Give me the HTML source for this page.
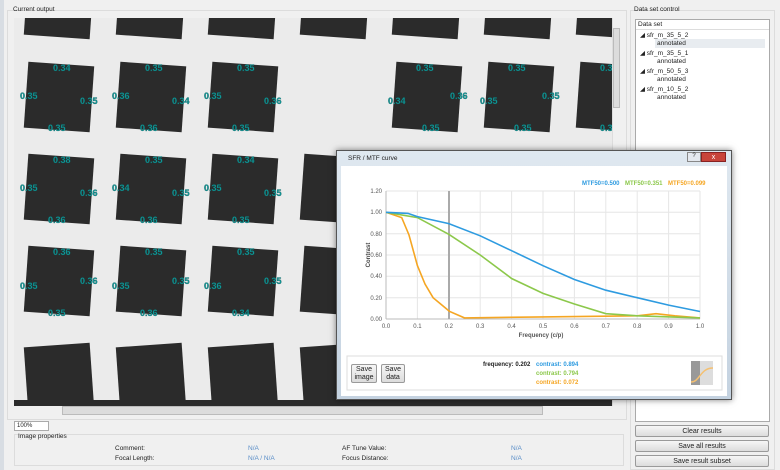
<!DOCTYPE html>
<html><head><meta charset="utf-8"><style>
*{margin:0;padding:0;box-sizing:border-box}
body{width:780px;height:470px;overflow:hidden;background:#f0f0f0;font-family:"Liberation Sans",sans-serif;font-size:7px;color:#222;position:relative}
.a{position:absolute}
.btn{position:absolute;border:1px solid #9a9a9a;border-radius:2px;background:linear-gradient(#f6f6f6,#dcdcdc);text-align:center;font-size:7px;line-height:11px}
.lab{position:absolute;font-size:6.5px}
.na{color:#5a8ec8}
</style></head><body>
<div class="a" style="left:0;top:0;width:4px;height:470px;background:#d8dde3"></div>
<div class="a" style="left:7px;top:10px;width:620px;height:410px;border:1px solid #dcdcdc"></div>
<div class="lab" style="left:13px;top:6px">Current output</div>
<svg class="a" style="left:14px;top:18px" width="598" height="388" viewBox="14 18 598 388">
<rect x="14" y="18" width="598" height="388" fill="#ebebeb"/>
<g fill="#2b2b2b">
<rect x="26" y="-29" width="66" height="66" transform="rotate(4 59 4)"/>
<rect x="118" y="-29" width="66" height="66" transform="rotate(4 151 4)"/>
<rect x="210" y="-29" width="66" height="66" transform="rotate(4 243 4)"/>
<rect x="302" y="-29" width="66" height="66" transform="rotate(4 335 4)"/>
<rect x="394" y="-29" width="66" height="66" transform="rotate(4 427 4)"/>
<rect x="486" y="-29" width="66" height="66" transform="rotate(4 519 4)"/>
<rect x="578" y="-29" width="66" height="66" transform="rotate(4 611 4)"/>
<rect x="26" y="64" width="66" height="66" transform="rotate(4 59 97)"/>
<rect x="118" y="64" width="66" height="66" transform="rotate(4 151 97)"/>
<rect x="210" y="64" width="66" height="66" transform="rotate(4 243 97)"/>
<rect x="394" y="64" width="66" height="66" transform="rotate(4 427 97)"/>
<rect x="486" y="64" width="66" height="66" transform="rotate(4 519 97)"/>
<rect x="578" y="64" width="66" height="66" transform="rotate(4 611 97)"/>
<rect x="26" y="156" width="66" height="66" transform="rotate(4 59 189)"/>
<rect x="118" y="156" width="66" height="66" transform="rotate(4 151 189)"/>
<rect x="210" y="156" width="66" height="66" transform="rotate(4 243 189)"/>
<rect x="302" y="156" width="66" height="66" transform="rotate(4 335 189)"/>
<rect x="26" y="248" width="66" height="66" transform="rotate(4 59 281)"/>
<rect x="118" y="248" width="66" height="66" transform="rotate(4 151 281)"/>
<rect x="210" y="248" width="66" height="66" transform="rotate(4 243 281)"/>
<rect x="302" y="248" width="66" height="66" transform="rotate(4 335 281)"/>
<rect x="26" y="345" width="66" height="66" transform="rotate(-4 59 378)"/>
<rect x="118" y="345" width="66" height="66" transform="rotate(-4 151 378)"/>
<rect x="210" y="345" width="66" height="66" transform="rotate(-4 243 378)"/>
<rect x="302" y="345" width="66" height="66" transform="rotate(-4 335 378)"/>
<rect x="14" y="400" width="598" height="6"/>
</g>
<g fill="#139a9a" font-size="9" font-weight="bold" font-family="Liberation Sans,sans-serif" stroke="#0a5a5a" stroke-width="0.3">
<text x="53" y="71">0.34</text><text x="20" y="99">0.35</text><text x="80" y="104">0.35</text><text x="48" y="131">0.35</text>
<text x="145" y="71">0.35</text><text x="112" y="99">0.36</text><text x="172" y="104">0.34</text><text x="140" y="131">0.36</text>
<text x="237" y="71">0.35</text><text x="204" y="99">0.35</text><text x="264" y="104">0.36</text><text x="232" y="131">0.35</text>
<text x="416" y="71">0.35</text><text x="388" y="104">0.34</text><text x="450" y="99">0.36</text><text x="422" y="131">0.35</text>
<text x="508" y="71">0.35</text><text x="480" y="104">0.35</text><text x="542" y="99">0.35</text><text x="514" y="131">0.35</text>
<text x="600" y="71">0.3</text><text x="600" y="131">0.3</text>
<text x="53" y="163">0.38</text><text x="20" y="191">0.35</text><text x="80" y="196">0.36</text><text x="48" y="223">0.36</text>
<text x="145" y="163">0.35</text><text x="112" y="191">0.34</text><text x="172" y="196">0.35</text><text x="140" y="223">0.36</text>
<text x="237" y="163">0.34</text><text x="204" y="191">0.35</text><text x="264" y="196">0.35</text><text x="232" y="223">0.35</text>
<text x="53" y="255">0.36</text><text x="20" y="289">0.35</text><text x="80" y="284">0.36</text><text x="48" y="316">0.35</text>
<text x="145" y="255">0.35</text><text x="112" y="289">0.35</text><text x="172" y="284">0.35</text><text x="140" y="316">0.36</text>
<text x="237" y="255">0.35</text><text x="204" y="289">0.36</text><text x="264" y="284">0.35</text><text x="232" y="316">0.34</text>
</g>
</svg>
<div class="a" style="left:612px;top:18px;width:9px;height:388px;background:#f0f0f0;border-left:1px solid #ddd"></div>
<div class="a" style="left:613px;top:28px;width:7px;height:80px;background:#dcdcdc;border:1px solid #bbb"></div>
<div class="a" style="left:14px;top:406px;width:598px;height:9px;background:#f0f0f0"></div>
<div class="a" style="left:62px;top:406px;width:481px;height:9px;background:#dcdcdc;border:1px solid #bbb"></div>
<div class="a" style="left:14px;top:421px;width:35px;height:10px;background:#fff;border:1px solid #aaa;font-size:6px;padding-left:2px;line-height:8px">100%</div>
<div class="a" style="left:14px;top:434px;width:610px;height:32px;border:1px solid #dcdcdc"></div>
<div class="lab" style="left:18px;top:433px">Image properties</div>
<div class="lab" style="left:115px;top:445px">Comment:</div><div class="lab na" style="left:248px;top:445px">N/A</div>
<div class="lab" style="left:342px;top:445px">AF Tune Value:</div><div class="lab na" style="left:511px;top:445px">N/A</div>
<div class="lab" style="left:115px;top:455px">Focal Length:</div><div class="lab na" style="left:248px;top:455px">N/A / N/A</div>
<div class="lab" style="left:342px;top:455px">Focus Distance:</div><div class="lab na" style="left:511px;top:455px">N/A</div>

<div class="a" style="left:630px;top:10px;width:145px;height:460px;border:1px solid #dcdcdc"></div>
<div class="lab" style="left:634px;top:6px">Data set control</div>
<div class="a" style="left:635px;top:19px;width:135px;height:403px;background:#fff;border:1px solid #aaa"></div>
<div class="lab" style="left:638px;top:21px">Data set</div>
<div class="a" style="left:636px;top:29px;width:133px;height:1px;background:#ddd"></div>
<div class="a" style="left:655px;top:39px;width:110px;height:9px;background:#e8ecf0"></div>
<div class="lab" style="left:640px;top:31px">◢ sfr_m_35_5_2</div><div class="lab" style="left:657px;top:40px">annotated</div>
<div class="lab" style="left:640px;top:49px">◢ sfr_m_35_5_1</div><div class="lab" style="left:657px;top:58px">annotated</div>
<div class="lab" style="left:640px;top:67px">◢ sfr_m_50_5_3</div><div class="lab" style="left:657px;top:76px">annotated</div>
<div class="lab" style="left:640px;top:85px">◢ sfr_m_10_5_2</div><div class="lab" style="left:657px;top:94px">annotated</div>
<div class="btn" style="left:635px;top:425px;width:134px;height:12px">Clear results</div>
<div class="btn" style="left:635px;top:440px;width:134px;height:12px">Save all results</div>
<div class="btn" style="left:635px;top:455px;width:134px;height:12px">Save result subset</div>

<div class="a" style="left:336px;top:150px;width:396px;height:250px;background:linear-gradient(#dfe8f0,#c4d2e0);border:1px solid #555;box-shadow:0 0 6px rgba(0,0,0,.5)"></div>
<div class="lab" style="left:348px;top:155px">SFR / MTF curve</div>
<div class="a" style="left:687px;top:152px;width:14px;height:10px;background:#e4e8ee;border:1px solid #888;font-size:6px;text-align:center">?</div>
<div class="a" style="left:701px;top:152px;width:25px;height:10px;background:#c8443a;border:1px solid #822;color:#fff;font-size:7px;text-align:center;line-height:9px">x</div>
<div class="a" style="left:341px;top:166px;width:386px;height:230px;background:#fff"></div>
<svg class="a" style="left:341px;top:166px" width="386" height="230" viewBox="341 166 386 230" font-family="Liberation Sans,sans-serif">
<g stroke="#e6e6e6" stroke-width="1">
<line x1="386" y1="191" x2="700" y2="191"/><line x1="386" y1="212.3" x2="700" y2="212.3"/><line x1="386" y1="233.7" x2="700" y2="233.7"/><line x1="386" y1="255" x2="700" y2="255"/><line x1="386" y1="276.3" x2="700" y2="276.3"/><line x1="386" y1="297.7" x2="700" y2="297.7"/>
<line x1="417.4" y1="191" x2="417.4" y2="319"/><line x1="448.8" y1="191" x2="448.8" y2="319"/><line x1="480.2" y1="191" x2="480.2" y2="319"/><line x1="511.6" y1="191" x2="511.6" y2="319"/><line x1="543" y1="191" x2="543" y2="319"/><line x1="574.4" y1="191" x2="574.4" y2="319"/><line x1="605.8" y1="191" x2="605.8" y2="319"/><line x1="637.2" y1="191" x2="637.2" y2="319"/><line x1="668.6" y1="191" x2="668.6" y2="319"/><line x1="700" y1="191" x2="700" y2="319"/>
</g>
<line x1="386" y1="191" x2="386" y2="319" stroke="#bbb"/><line x1="386" y1="319" x2="700" y2="319" stroke="#bbb"/>
<line x1="449" y1="191" x2="449" y2="319" stroke="#aaa" stroke-width="2"/>
<g fill="none" stroke-width="1.6">
<polyline stroke="#f5a623" points="386,212.3 401.7,217.6 409,235 417.4,265.6 425,284 433.1,297.7 449.4,311.3 464.5,317.9 543,316.9 637.2,315.8 656,313.7 674.9,315.8 700,317.9"/>
<polyline stroke="#8cc84b" points="386,212.3 417.4,217.6 448.8,234.3 480.2,255 511.6,278.5 543,293.4 574.4,304 605.8,313.7 637.2,315.8 700,317.9"/>
<polyline stroke="#2e9be0" points="386,212.3 408,213.4 417.4,216.6 448.8,223.6 480.2,235.8 511.6,250.7 543,265.7 574.4,279.5 605.8,290.2 637.2,297.7 668.6,305.1 700,311.5"/>
</g>
<g font-size="6" fill="#555" text-anchor="end">
<text x="382" y="193">1.20</text><text x="382" y="214">1.00</text><text x="382" y="236">0.80</text><text x="382" y="257">0.60</text><text x="382" y="278">0.40</text><text x="382" y="300">0.20</text><text x="382" y="321">0.00</text>
</g>
<g font-size="6" fill="#555" text-anchor="middle">
<text x="386" y="328">0.0</text><text x="417.4" y="328">0.1</text><text x="448.8" y="328">0.2</text><text x="480.2" y="328">0.3</text><text x="511.6" y="328">0.4</text><text x="543" y="328">0.5</text><text x="574.4" y="328">0.6</text><text x="605.8" y="328">0.7</text><text x="637.2" y="328">0.8</text><text x="668.6" y="328">0.9</text><text x="700" y="328">1.0</text>
<text x="541" y="337" font-weight="bold">Frequency (c/p)</text>
</g>
<text x="370" y="255" font-size="6" font-weight="bold" fill="#444" transform="rotate(-90 370 255)" text-anchor="middle">Contrast</text>
<g font-size="6" font-weight="bold">
<text x="582" y="185" fill="#2e9be0">MTF50=0.500</text><text x="625" y="185" fill="#8cc84b">MTF50=0.351</text><text x="668" y="185" fill="#f5a623">MTF50=0.099</text>
</g>
<rect x="347" y="356" width="375" height="34" fill="#fff" stroke="#ddd"/>
<g font-size="6" font-weight="bold">
<text x="483" y="366" fill="#222">frequency: 0.202</text>
<text x="536" y="366" fill="#2e9be0">contrast: 0.894</text>
<text x="536" y="375" fill="#8cc84b">contrast: 0.794</text>
<text x="536" y="384" fill="#f5a623">contrast: 0.072</text>
</g>
<rect x="691" y="361" width="22" height="24" fill="#999"/><rect x="700" y="361" width="13" height="24" fill="#ddd"/>
<path d="M691,382 C700,382 700,368 713,368" stroke="#f5c070" fill="none" stroke-width="1.5"/>
</svg>
<div class="btn" style="left:351px;top:364px;width:26px;height:19px;line-height:8px;padding-top:1px">Save<br>image</div>
<div class="btn" style="left:381px;top:364px;width:24px;height:19px;line-height:8px;padding-top:1px">Save<br>data</div>
</body></html>
